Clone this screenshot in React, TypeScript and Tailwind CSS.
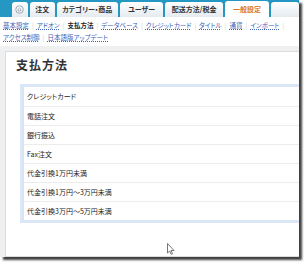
import React from 'react';

const tabs = [
  { label: '注文', w: 'w-[27px]' },
  { label: 'カテゴリー・商品', w: 'w-[66px]' },
  { label: 'ユーザー', w: 'w-[47px]' },
  { label: '配送方法/税金', w: 'w-[62px]' },
];

const subLinks1 = ['基本設定', 'アドオン', '支払方法', 'データベース', 'クレジットカード', 'タイトル', '通貨', 'インポート'];
const subLinks2 = ['アクセス制御', '日本語版アップデート'];

const payments = [
  'クレジットカード',
  '電話注文',
  '銀行振込',
  'Fax注文',
  '代金引換1万円未満',
  '代金引換1万円～3万円未満',
  '代金引換3万円～5万円未満',
];

const SubLink = ({ label }: { label: string }) =>
  label === '支払方法' ? (
    <span className="font-bold text-[#222]">{label}</span>
  ) : (
    <span className="text-[#3a62b8] underline decoration-dotted underline-offset-1">{label}</span>
  );

const App = () => {
  return (
    <div className="w-[304px] h-[262px] bg-white overflow-hidden font-['Noto_Sans_CJK_JP','Liberation_Sans',sans-serif] [font-feature-settings:'palt']">
      <div className="w-[299px] h-[257px] bg-[#eef0f2] overflow-hidden shadow-[3px_3px_2px_rgba(0,0,0,0.75)] flex flex-col">
        {/* tab bar */}
        <div className="h-[17px] bg-[#2497c2] flex items-end pl-[12px] gap-[2px] shrink-0">
          <div className="w-[17px] h-[15px] rounded-t-[3px] bg-gradient-to-b from-white to-[#e4ebef] flex items-center justify-center">
            <svg width="9" height="9" viewBox="0 0 10 10">
              <circle cx="5" cy="5" r="4.2" fill="none" stroke="#8a9aa4" strokeWidth="0.9" />
              <path d="M3 5.2 L5 3.4 L7 5.2 M3.7 4.8 V6.6 H6.3 V4.8" fill="none" stroke="#8a9aa4" strokeWidth="0.7" />
            </svg>
          </div>
          {tabs.map((t) => (
            <div
              key={t.label}
              className={`${t.w} h-[15px] rounded-t-[3px] bg-gradient-to-b from-white to-[#e4ebef] flex items-center justify-center text-[7px] font-bold text-[#333] leading-none`}
            >
              {t.label}
            </div>
          ))}
          <div className="w-[48px] h-[16px] rounded-t-[3px] bg-white flex items-center justify-center text-[7px] font-bold text-[#d9762a] leading-none">
            一般設定
          </div>
          <div className="w-[30px] h-[15px] rounded-t-[3px] bg-gradient-to-b from-white to-[#e4ebef]" />
        </div>

        {/* sub menu */}
        <div className="h-[29px] bg-white px-[3px] pt-[4px] flex flex-col gap-[3px] text-[6.5px] leading-[9px] shrink-0">
          <div className="flex items-center gap-[3px] whitespace-nowrap">
            {subLinks1.map((l) => (
              <React.Fragment key={l}>
                <SubLink label={l} />
                <span className="text-[#d0d0d0]">|</span>
              </React.Fragment>
            ))}
          </div>
          <div className="flex items-center gap-[3px] whitespace-nowrap">
            <SubLink label={subLinks2[0]} />
            <span className="text-[#d0d0d0]">|</span>
            <SubLink label={subLinks2[1]} />
          </div>
        </div>

        {/* content */}
        <div className="flex-1 pl-[5px] pt-[5px]">
          <div className="h-full w-[320px] bg-white border border-[#dcdcdc] pt-[6px] pl-[10px]">
            <h1 className="text-[12px] font-bold text-[#333] tracking-[1px] leading-[14px]">支払方法</h1>
            <div className="mt-[12px] ml-[4px] border-[3px] border-[#dbe6f7] bg-white">
              <div className="border-l border-[#e0e0e0]">
                {payments.map((p, i) => (
                  <div
                    key={p}
                    className={`h-[19px] pl-[3px] flex items-center text-[7px] text-[#222] ${i > 0 ? 'border-t border-[#ececec]' : ''}`}
                  >
                    {p}
                  </div>
                ))}
              </div>
            </div>
            <div className="mt-[20px] ml-[151px]">
              <svg width="8" height="12" viewBox="0 0 8 12">
                <path d="M0.5 0.5 V10 L2.7 8 L4.2 11.3 L5.5 10.7 L4 7.5 H7 Z" fill="white" stroke="#555" strokeWidth="0.8" strokeLinejoin="round" />
              </svg>
            </div>
          </div>
        </div>
      </div>
    </div>
  );
};

export default App;
